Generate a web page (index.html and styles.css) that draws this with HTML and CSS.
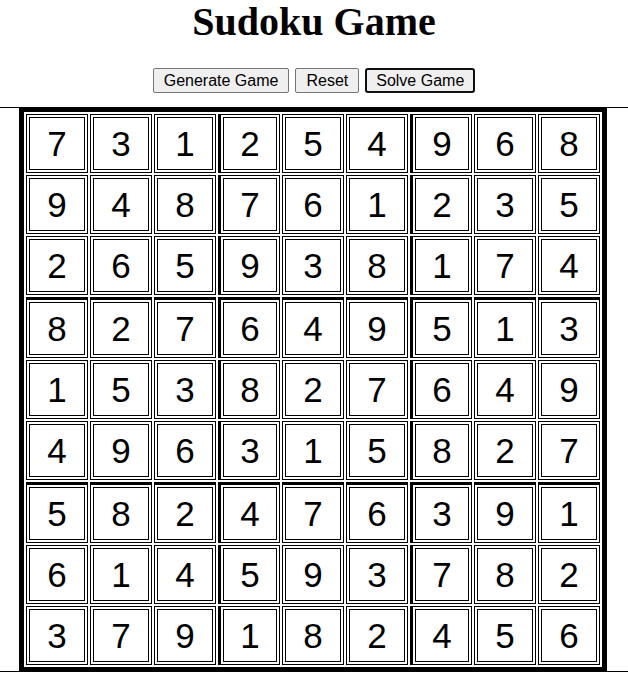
FILE: index.html
```html
<!DOCTYPE html>
<html>
<head>
<meta charset="utf-8">
<title>Sudoku Game</title>
<link rel="stylesheet" href="styles.css">
</head>
<body>
<h1 class="title">Sudoku Game</h1>
<div class="controls">
  <button class="btn">Generate Game</button>
  <button class="btn">Reset</button>
  <button class="btn btn-focus">Solve Game</button>
</div>
<div class="board-wrap">
<table class="board">
  <tr><td><div class="cell">7</div></td><td><div class="cell">3</div></td><td><div class="cell">1</div></td><td class="box-left"><div class="cell">2</div></td><td><div class="cell">5</div></td><td><div class="cell">4</div></td><td class="box-left"><div class="cell">9</div></td><td><div class="cell">6</div></td><td><div class="cell">8</div></td></tr>
  <tr><td><div class="cell">9</div></td><td><div class="cell">4</div></td><td><div class="cell">8</div></td><td class="box-left"><div class="cell">7</div></td><td><div class="cell">6</div></td><td><div class="cell">1</div></td><td class="box-left"><div class="cell">2</div></td><td><div class="cell">3</div></td><td><div class="cell">5</div></td></tr>
  <tr><td><div class="cell">2</div></td><td><div class="cell">6</div></td><td><div class="cell">5</div></td><td class="box-left"><div class="cell">9</div></td><td><div class="cell">3</div></td><td><div class="cell">8</div></td><td class="box-left"><div class="cell">1</div></td><td><div class="cell">7</div></td><td><div class="cell">4</div></td></tr>
  <tr class="box-top"><td><div class="cell">8</div></td><td><div class="cell">2</div></td><td><div class="cell">7</div></td><td class="box-left"><div class="cell">6</div></td><td><div class="cell">4</div></td><td><div class="cell">9</div></td><td class="box-left"><div class="cell">5</div></td><td><div class="cell">1</div></td><td><div class="cell">3</div></td></tr>
  <tr><td><div class="cell">1</div></td><td><div class="cell">5</div></td><td><div class="cell">3</div></td><td class="box-left"><div class="cell">8</div></td><td><div class="cell">2</div></td><td><div class="cell">7</div></td><td class="box-left"><div class="cell">6</div></td><td><div class="cell">4</div></td><td><div class="cell">9</div></td></tr>
  <tr><td><div class="cell">4</div></td><td><div class="cell">9</div></td><td><div class="cell">6</div></td><td class="box-left"><div class="cell">3</div></td><td><div class="cell">1</div></td><td><div class="cell">5</div></td><td class="box-left"><div class="cell">8</div></td><td><div class="cell">2</div></td><td><div class="cell">7</div></td></tr>
  <tr class="box-top"><td><div class="cell">5</div></td><td><div class="cell">8</div></td><td><div class="cell">2</div></td><td class="box-left"><div class="cell">4</div></td><td><div class="cell">7</div></td><td><div class="cell">6</div></td><td class="box-left"><div class="cell">3</div></td><td><div class="cell">9</div></td><td><div class="cell">1</div></td></tr>
  <tr><td><div class="cell">6</div></td><td><div class="cell">1</div></td><td><div class="cell">4</div></td><td class="box-left"><div class="cell">5</div></td><td><div class="cell">9</div></td><td><div class="cell">3</div></td><td class="box-left"><div class="cell">7</div></td><td><div class="cell">8</div></td><td><div class="cell">2</div></td></tr>
  <tr><td><div class="cell">3</div></td><td><div class="cell">7</div></td><td><div class="cell">9</div></td><td class="box-left"><div class="cell">1</div></td><td><div class="cell">8</div></td><td><div class="cell">2</div></td><td class="box-left"><div class="cell">4</div></td><td><div class="cell">5</div></td><td><div class="cell">6</div></td></tr>
</table>
</div>
</body>
</html>
```
FILE: styles.css
```css
html, body {
  margin: 0;
  padding: 0;
  background: #fff;
}

.title {
  margin: 0 0 24px 0;
  font-family: "Liberation Serif", "Times New Roman", serif;
  font-weight: bold;
  font-size: 40px;
  line-height: 44px;
  text-align: center;
  color: #000;
}

.controls {
  display: flex;
  justify-content: center;
  gap: 6px;
  margin-bottom: 14px;
}

.btn {
  font-family: "Liberation Sans", Arial, sans-serif;
  font-size: 16px;
  height: 25px;
  padding: 0 10px;
  background: #efefef;
  color: #000;
  border: 1px solid #767676;
  border-radius: 2px;
}

.btn-focus {
  border: 2px solid #101010;
  border-radius: 3px;
  padding: 0 9px;
}

.board-wrap {
  border-top: 1px solid #000;
  border-bottom: 1px solid #000;
  padding-right: 2px;
}

.board {
  margin: -1px auto;
  width: 588px;
  table-layout: fixed;
  border: 5px solid #000;
  border-spacing: 2px;
  background: #fff;
}

.board td {
  border: 1px solid #000;
  padding: 2px;
}

.board td.box-left {
  border-left: 3px solid #000;
}

.board tr.box-top td {
  border-top: 3px solid #000;
}

.cell {
  box-sizing: border-box;
  width: 100%;
  height: 53px;
  border: 1px solid #000;
  display: flex;
  align-items: center;
  justify-content: center;
  font-family: "Liberation Sans", Arial, sans-serif;
  font-size: 35px;
  color: #000;
}
```
